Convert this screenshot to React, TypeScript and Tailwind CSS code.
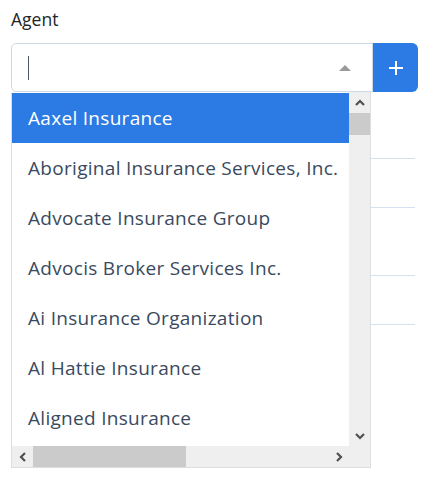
import React from "react";

const items = [
  "Aaxel Insurance",
  "Aboriginal Insurance Services, Inc.",
  "Advocate Insurance Group",
  "Advocis Broker Services Inc.",
  "Ai Insurance Organization",
  "Al Hattie Insurance",
  "Aligned Insurance",
];

function Chevron({ dir }: { dir: "up" | "down" | "left" | "right" }) {
  const pts: Record<string, string> = {
    up: "1,6 5,2 9,6",
    down: "1,2 5,6 9,2",
    left: "6,1 2,5 6,9",
    right: "2,1 6,5 2,9",
  };
  const vertical = dir === "up" || dir === "down";
  return (
    <svg width={vertical ? 10 : 8} height={vertical ? 8 : 10} viewBox={vertical ? "0 0 10 8" : "0 0 8 10"}>
      <polyline points={pts[dir]} fill="none" stroke="#505050" strokeWidth="2.2" />
    </svg>
  );
}

export default function App() {
  return (
    <div className="relative w-[426px] h-[482px] bg-white overflow-hidden" style={{ fontFamily: "'Open Sans', Lato, sans-serif" }}>
      <div className="px-[11px] pt-[6px]">
        <div className="text-[17.5px] leading-[26px] text-[#212529]" style={{ fontFamily: "'Open Sans', 'Liberation Sans', sans-serif" }}>
          Agent
        </div>
        <div className="mt-[11px] flex h-[49px]">
          <div className="relative w-[362px] shrink-0 h-full border border-[#cfd9e5] rounded-l-[5px] bg-white flex items-center">
            <div className="ml-[16px] w-px h-[24px] bg-[#4a5868]" />
            <div className="absolute right-[21px] top-[21px] w-0 h-0 border-l-[6px] border-r-[6px] border-b-[6px] border-l-transparent border-r-transparent border-b-[#9a9a9a]" />
          </div>
          <div className="w-[45px] shrink-0 h-full bg-[#2c7be4] rounded-r-[6px] flex items-center justify-center">
            <svg width="14" height="14" viewBox="0 0 14 14">
              <path d="M7 0V14M0 7H14" stroke="white" strokeWidth="2" />
            </svg>
          </div>
        </div>
        <div className="ml-[359px] mt-[66px] flex flex-col">
          <div className="h-[49px] border-t border-[#d5e1ee]" />
          <div className="h-[68px] border-t border-[#d5e1ee]" />
          <div className="h-[49px] border-t border-[#d5e1ee]" />
          <div className="h-[49px] border-t border-[#d5e1ee]" />
        </div>
      </div>

      <div className="absolute left-[11px] top-[92px] w-[360px] h-[376px] bg-white border-l border-r border-b border-[#dedede] flex flex-col">
        <div className="flex flex-1 min-h-0">
          <div className="flex-1 overflow-hidden pt-px">
            {items.map((t, i) => (
              <div
                key={t}
                className={`h-[50px] flex items-center pl-[16px] text-[19px] tracking-[0.3px] whitespace-nowrap ${
                  i === 0 ? "bg-[#2c7be4] text-white" : "text-[#3a4a5e]"
                }`}
              >
                {t}
              </div>
            ))}
          </div>
          <div className="w-[21px] bg-[#efefef] flex flex-col">
            <div className="h-[21px] flex items-center justify-center">
              <Chevron dir="up" />
            </div>
            <div className="h-[22px] bg-[#cbcbcb]" />
            <div className="flex-1" />
            <div className="h-[21px] flex items-center justify-center">
              <Chevron dir="down" />
            </div>
          </div>
        </div>
        <div className="h-[21px] bg-[#efefef] flex">
          <div className="w-[21px] flex items-center justify-center">
            <Chevron dir="left" />
          </div>
          <div className="w-[153px] bg-[#cbcbcb]" />
          <div className="flex-1" />
          <div className="w-[21px] flex items-center justify-center">
            <Chevron dir="right" />
          </div>
          <div className="w-[21px]" />
        </div>
      </div>
    </div>
  );
}
